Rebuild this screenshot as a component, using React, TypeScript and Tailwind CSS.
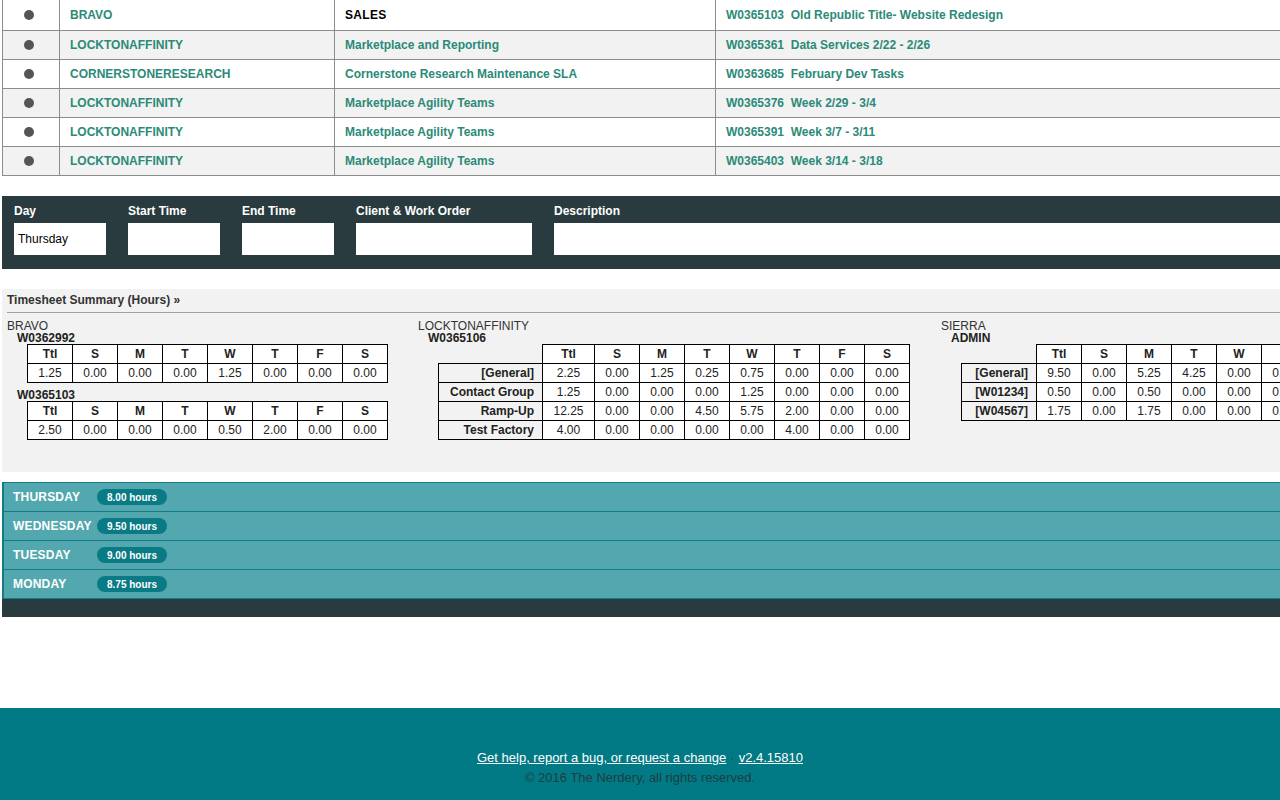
import React from "react";

const recent = [
  { client: "BRAVO", project: "SALES", wo: "W0365103", title: "Old Republic Title- Website Redesign", plain: true },
  { client: "LOCKTONAFFINITY", project: "Marketplace and Reporting", wo: "W0365361", title: "Data Services 2/22 - 2/26" },
  { client: "CORNERSTONERESEARCH", project: "Cornerstone Research Maintenance SLA", wo: "W0363685", title: "February Dev Tasks" },
  { client: "LOCKTONAFFINITY", project: "Marketplace Agility Teams", wo: "W0365376", title: "Week 2/29 - 3/4" },
  { client: "LOCKTONAFFINITY", project: "Marketplace Agility Teams", wo: "W0365391", title: "Week 3/7 - 3/11" },
  { client: "LOCKTONAFFINITY", project: "Marketplace Agility Teams", wo: "W0365403", title: "Week 3/14 - 3/18" },
];

const DAYS = ["Ttl", "S", "M", "T", "W", "T", "F", "S"];

const days = [
  { name: "Thursday", hours: "8.00" },
  { name: "Wednesday", hours: "9.50" },
  { name: "Tuesday", hours: "9.00" },
  { name: "Monday", hours: "8.75" },
];

const cell = "h-[19px] border border-black bg-white p-0 text-center leading-[14px]";

function SimpleTable({ values }: { values: string[] }) {
  return (
    <table className="ml-[20px] w-[361px] table-fixed border-collapse">
      <colgroup>
        {DAYS.map((_, i) => (
          <col key={i} className="w-[45px]" />
        ))}
      </colgroup>
      <tbody>
        <tr>
          {DAYS.map((d, i) => (
            <th key={i} className={`${cell} font-bold`}>
              {d}
            </th>
          ))}
        </tr>
        <tr>
          {values.map((v, i) => (
            <td key={i} className={cell}>
              {v}
            </td>
          ))}
        </tr>
      </tbody>
    </table>
  );
}

function LabelTable({
  rows,
  labelW,
  ttlW,
  width,
}: {
  rows: { label: string; values: string[] }[];
  labelW: string;
  ttlW: string;
  width: string;
}) {
  return (
    <table className={`ml-[20px] ${width} table-fixed border-collapse`}>
      <colgroup>
        <col className={labelW} />
        <col className={ttlW} />
        {DAYS.slice(1).map((_, i) => (
          <col key={i} className="w-[45px]" />
        ))}
      </colgroup>
      <tbody>
        <tr>
          <th className="p-0" />
          {DAYS.map((d, i) => (
            <th key={i} className={`${cell} font-bold`}>
              {d}
            </th>
          ))}
        </tr>
        {rows.map((r) => (
          <tr key={r.label}>
            <td className="h-[19px] border border-black p-0 pr-[8px] text-right font-bold leading-[14px]">{r.label}</td>
            {r.values.map((v, i) => (
              <td key={i} className={cell}>
                {v}
              </td>
            ))}
          </tr>
        ))}
      </tbody>
    </table>
  );
}

export default function App() {
  return (
    <div className="w-full overflow-hidden bg-white font-['Liberation_Sans',Arial,sans-serif] text-[12px]">
      <div className="w-[1300px] pl-[2px]">
        {/* recent work orders */}
        <div className="overflow-hidden">
          <table className="-mt-px w-[1298px] table-fixed border-collapse">
            <colgroup>
              <col className="w-[57px]" />
              <col className="w-[275px]" />
              <col className="w-[381px]" />
              <col />
            </colgroup>
            <tbody>
              {recent.map((r, i) => (
                <tr key={r.wo} className={`${i === 0 ? "h-[31px]" : "h-[29px]"} ${i % 2 ? "bg-[#f1f2f1]" : "bg-white"}`}>
                  <td className="border border-[#8c8c8c] p-0">
                    <div className="mx-auto h-[10px] w-[10px] -translate-x-[2px] rounded-full bg-[#555]" />
                  </td>
                  <td className="border border-[#8c8c8c] px-[10px] py-0 font-bold text-[#2b8a78]">{r.client}</td>
                  <td
                    className={`border border-[#8c8c8c] px-[10px] py-0 font-bold ${
                      r.plain ? "tracking-[0.3px] text-black" : "text-[#2b8a78]"
                    }`}
                  >
                    {r.project}
                  </td>
                  <td className="border border-[#8c8c8c] px-[10px] py-0 font-bold text-[#2b8a78]">
                    {r.wo}&nbsp;&nbsp;{r.title}
                  </td>
                </tr>
              ))}
            </tbody>
          </table>
        </div>

        {/* entry form */}
        <div className="mt-[20px] flex gap-[22px] bg-[#293b3e] pb-[14px] pl-[12px] pt-[8px]">
          {[
            { label: "Day", w: "w-[92px]", value: "Thursday" },
            { label: "Start Time", w: "w-[92px]", value: "" },
            { label: "End Time", w: "w-[92px]", value: "" },
            { label: "Client & Work Order", w: "w-[176px]", value: "" },
            { label: "Description", w: "flex-1", value: "" },
          ].map((f) => (
            <div key={f.label} className={`flex flex-col ${f.w}`}>
              <label className="h-[19px] font-bold leading-[15px] text-white">{f.label}</label>
              <input
                readOnly
                value={f.value}
                className="h-[32px] w-full bg-white px-[4px] text-[12px] text-black outline-none"
              />
            </div>
          ))}
        </div>

        {/* summary */}
        <div className="mt-[20px] h-[183px] bg-[#f1f2f1] pl-[5px] text-[#222]">
          <div className="flex h-[24px] items-end border-b border-[#a0a0a0] pb-[3px] font-bold leading-[18px] text-[#333]">
            Timesheet Summary (Hours) »
          </div>
          <div className="mt-[7px] flex items-start gap-[30px]">
            <div className="w-[381px] shrink-0">
              <div className="leading-[12px] text-[#333]">BRAVO</div>
              <div className="ml-[10px] font-bold leading-[12px]">W0362992</div>
              <SimpleTable values={["1.25", "0.00", "0.00", "0.00", "1.25", "0.00", "0.00", "0.00"]} />
              <div className="ml-[10px] mt-[6px] font-bold leading-[12px]">W0365103</div>
              <SimpleTable values={["2.50", "0.00", "0.00", "0.00", "0.50", "2.00", "0.00", "0.00"]} />
            </div>
            <div className="w-[493px] shrink-0">
              <div className="leading-[12px] text-[#333]">LOCKTONAFFINITY</div>
              <div className="ml-[10px] font-bold leading-[12px]">W0365106</div>
              <LabelTable
                width="w-[472px]"
                labelW="w-[104px]"
                ttlW="w-[52px]"
                rows={[
                  { label: "[General]", values: ["2.25", "0.00", "1.25", "0.25", "0.75", "0.00", "0.00", "0.00"] },
                  { label: "Contact Group", values: ["1.25", "0.00", "0.00", "0.00", "1.25", "0.00", "0.00", "0.00"] },
                  { label: "Ramp-Up", values: ["12.25", "0.00", "0.00", "4.50", "5.75", "2.00", "0.00", "0.00"] },
                  { label: "Test Factory", values: ["4.00", "0.00", "0.00", "0.00", "0.00", "4.00", "0.00", "0.00"] },
                ]}
              />
            </div>
            <div className="shrink-0">
              <div className="leading-[12px] text-[#333]">SIERRA</div>
              <div className="ml-[10px] font-bold leading-[12px]">ADMIN</div>
              <LabelTable
                width="w-[435px]"
                labelW="w-[75px]"
                ttlW="w-[45px]"
                rows={[
                  { label: "[General]", values: ["9.50", "0.00", "5.25", "4.25", "0.00", "0.00", "0.00", "0.00"] },
                  { label: "[W01234]", values: ["0.50", "0.00", "0.50", "0.00", "0.00", "0.00", "0.00", "0.00"] },
                  { label: "[W04567]", values: ["1.75", "0.00", "1.75", "0.00", "0.00", "0.00", "0.00", "0.00"] },
                ]}
              />
            </div>
          </div>
        </div>

        {/* days */}
        <div className="mt-[10px] border-l-2 border-t border-[#127d87]">
          {days.map((d) => (
            <div key={d.name} className="flex h-[29px] items-center border-b border-[#127d87] bg-[#52a8ae] pl-[9px]">
              <span className="w-[84px] font-bold uppercase tracking-[0.2px] text-white">{d.name}</span>
              <span className="flex h-[16px] w-[70px] items-center justify-center rounded-full bg-[#0a7a85] text-[10px] font-bold text-white">
                {d.hours} hours
              </span>
            </div>
          ))}
        </div>
        <div className="h-[18px] bg-[#293b3e]" />
      </div>

      {/* footer */}
      <footer className="mt-[91px] flex h-[92px] flex-col items-center bg-[#017a86] pt-[40px] text-[13px]">
        <div className="leading-[20px]">
          <a href="#" className="text-white underline">
            Get help, report a bug, or request a change
          </a>
          <span className="mx-[4px] text-[#22403f]">·</span>
          <a href="#" className="text-white underline">
            v2.4.15810
          </a>
        </div>
        <div className="leading-[20px] text-[#1f3d40]">© 2016 The Nerdery, all rights reserved.</div>
      </footer>
    </div>
  );
}
